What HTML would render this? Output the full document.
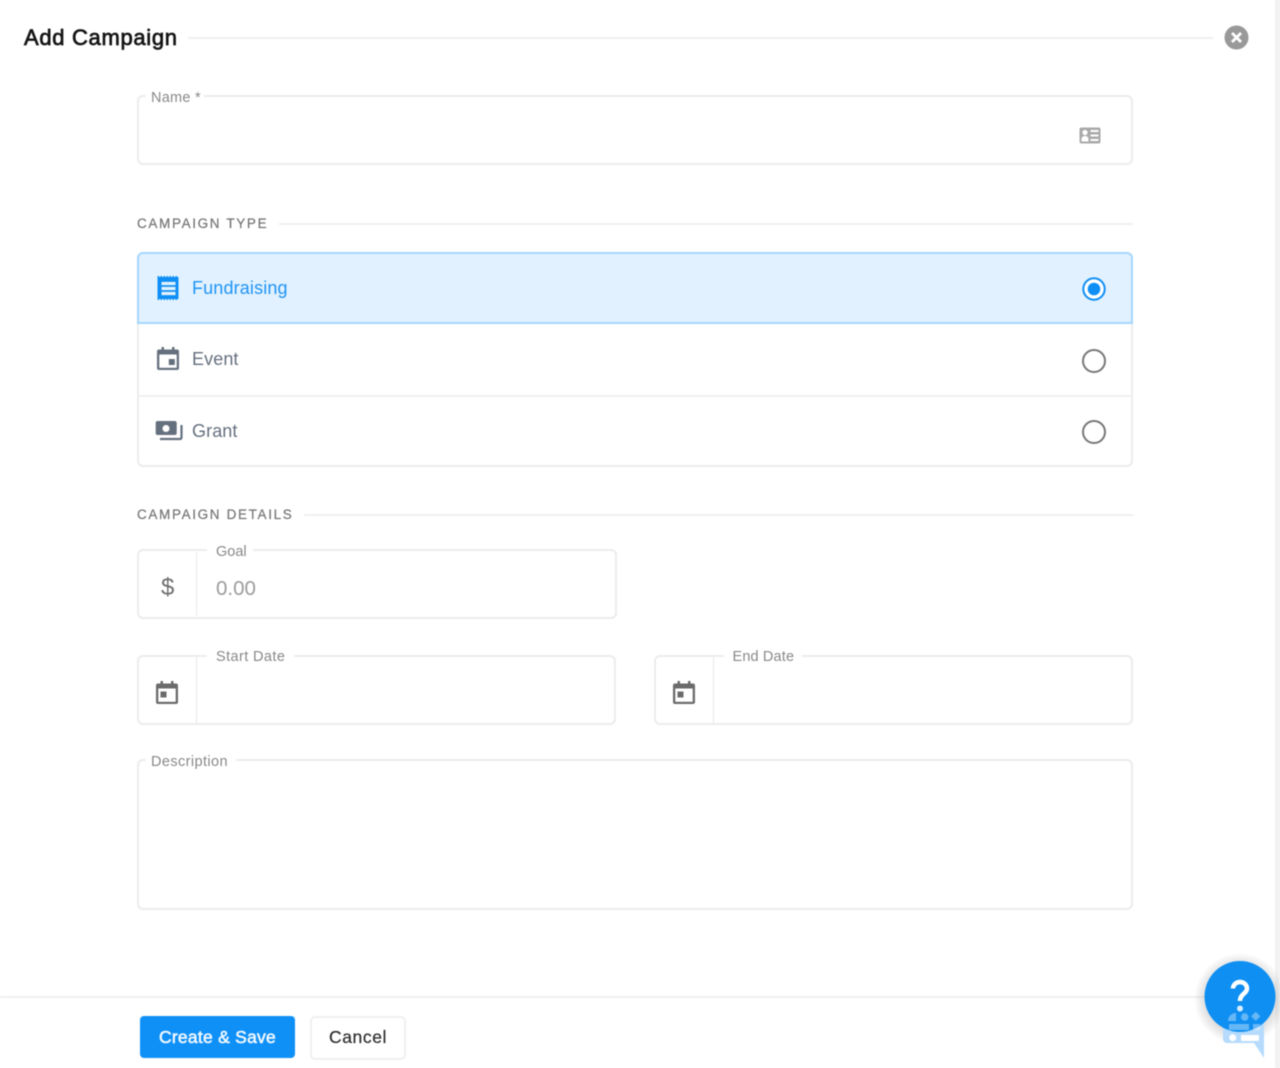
<!DOCTYPE html>
<html lang="en"><head><meta charset="utf-8"><title>Add Campaign</title>
<style>
html,body{margin:0;padding:0;width:1280px;height:1068px;overflow:hidden;background:#fff}
body{position:relative;font-family:"Liberation Sans",sans-serif}
#w{position:absolute;inset:0;filter:blur(.4px)}
#w div,#w svg,#w span{position:absolute;box-sizing:border-box}
.t{white-space:nowrap;line-height:20px;height:20px}
.box{border:2px solid #ececec;border-radius:6px;background:#fff}
.gap{background:#fff;height:4px}
.lab{font-size:14.5px;color:#888}
.sec{font-size:13.5px;color:#747474;letter-spacing:1.65px;-webkit-text-stroke:.2px #747474}
.ln{background:#f0f0f0;height:2px}
.opt{font-size:18px;color:#65707f}
</style></head><body><div id="w">
<div style="left:1275px;top:0;width:5px;height:1068px;background:#f2f2f2"></div>

<div class="t" style="left:24px;top:28px;font-size:22px;color:#151515;letter-spacing:.68px;-webkit-text-stroke:.7px #151515">Add Campaign</div>
<div class="ln" style="left:188px;top:37px;width:1025px"></div>
<svg style="left:1224px;top:25px" width="25" height="25" viewBox="0 0 25 25"><circle cx="12.5" cy="12.5" r="12" fill="#999"/><path d="M8 8l9 9M17 8l-9 9" stroke="#fff" stroke-width="2.8"/></svg>

<div class="box" style="left:137px;top:95px;width:996px;height:70px"></div>
<div class="gap" style="left:146px;top:93px;width:58px"></div>
<div class="t lab" style="left:151px;top:88px;letter-spacing:.25px">Name *</div>
<svg style="left:1079px;top:127px" width="22" height="17" viewBox="0 0 22 17"><rect x="0.5" y="0.5" width="21" height="16" rx="2" fill="#a9a9a9"/><circle cx="6" cy="5.500" r="2.600" fill="#fff"/><path d="M2.500 14.500v-2c0-2.500 1.500-3.500 3.500-3.500s3.500 1 3.500 3.500v2z" fill="#fff"/><path d="M11.500 4h8M11.500 8.500h8M11.500 13h8" stroke="#fff" stroke-width="2"/></svg>

<div class="t sec" style="left:137px;top:214px">CAMPAIGN TYPE</div>
<div class="ln" style="left:279px;top:223px;width:854px"></div>

<div class="box" style="left:137px;top:252px;width:996px;height:215px"></div>
<div style="left:137px;top:252px;width:996px;height:72px;background:#e1f1ff;border:2px solid #a6d7fd;border-radius:6px 6px 0 0"></div>
<div class="ln" style="left:138px;top:395px;width:994px"></div>

<svg style="left:157px;top:276px" width="22" height="24" viewBox="0 0 22 24"><rect x="0.500" y="1" width="21" height="22" fill="#0f8ff5"/><path d="M.5 .5h21M.5 23.500h21" stroke="#0f8ff5" stroke-dasharray="1.500 1.500"/><path d="M4.500 7.500h14M4.500 12.500h14M4.500 17.500h14" stroke="#e1f1ff" stroke-width="3.200"/></svg>
<div class="t" style="left:192px;top:278px;font-size:18px;color:#2095f5;letter-spacing:.15px">Fundraising</div>
<svg style="left:1082px;top:277px" width="24" height="24" viewBox="0 0 24 24"><circle cx="12" cy="12" r="10.700" fill="#fff" stroke="#0f8ff5" stroke-width="2"/><circle cx="12" cy="12" r="6.300" fill="#0f8ff5"/></svg>

<svg style="left:157px;top:347px" width="22" height="24" viewBox="0 0 22 24"><path d="M4.500 0h2.500v2.500h8V0h2.500v2.500h2.500a2 2 0 0 1 2 2V21a2 2 0 0 1-2 2H2a2 2 0 0 1-2-2V4.500a2 2 0 0 1 2-2h2.500z" fill="#65707f"/><rect x="2.300" y="7.500" width="17.400" height="13.300" fill="#fff"/><rect x="11.800" y="12" width="6" height="6" fill="#65707f"/></svg>
<div class="t opt" style="left:192px;top:349px;letter-spacing:.1px">Event</div>
<svg style="left:1082px;top:349px" width="24" height="24" viewBox="0 0 24 24"><circle cx="12" cy="12" r="11" fill="none" stroke="#777" stroke-width="2"/></svg>

<svg style="left:155px;top:420px" width="28" height="21" viewBox="0 0 28 21"><rect x="0.700" y="1" width="21" height="14" rx="2" fill="#65707f"/><circle cx="11" cy="8.500" r="3.500" fill="#fff"/><path d="M26.500 5v12.500a1.500 1.500 0 0 1-1.500 1.500H5" fill="none" stroke="#65707f" stroke-width="2.200"/></svg>
<div class="t opt" style="left:192px;top:421px;letter-spacing:.1px">Grant</div>
<svg style="left:1082px;top:420px" width="24" height="24" viewBox="0 0 24 24"><circle cx="12" cy="12" r="11" fill="none" stroke="#777" stroke-width="2"/></svg>

<div class="t sec" style="left:137px;top:505px">CAMPAIGN DETAILS</div>
<div class="ln" style="left:304px;top:514px;width:829px"></div>

<div class="box" style="left:137px;top:549px;width:480px;height:70px"></div>
<div style="left:196px;top:552px;width:1px;height:64px;background:#e8e8e8"></div>
<div class="gap" style="left:207px;top:547px;width:46px"></div>
<div class="t lab" style="left:216px;top:542px">Goal</div>
<div class="t" style="left:161px;top:578px;font-size:24px;color:#6f6f6f">$</div>
<div class="t" style="left:216px;top:579px;font-size:20.500px;color:#9c9c9c">0.00</div>

<div class="box" style="left:137px;top:655px;width:479px;height:70px"></div>
<div style="left:196px;top:656px;width:1px;height:68px;background:#e8e8e8"></div>
<div class="gap" style="left:207px;top:653px;width:87px"></div>
<div class="t lab" style="left:216px;top:647px;letter-spacing:.4px">Start Date</div>
<svg style="left:156px;top:681px" width="22" height="24" viewBox="0 0 22 24"><path d="M4.500 0h2.500v2.500h8V0h2.500v2.500h2.500a2 2 0 0 1 2 2V21a2 2 0 0 1-2 2H2a2 2 0 0 1-2-2V4.500a2 2 0 0 1 2-2h2.500z" fill="#6b6b6b"/><rect x="2.300" y="7.500" width="17.400" height="13.300" fill="#fff"/><rect x="4.500" y="10.500" width="6" height="6" fill="#6b6b6b"/></svg>

<div class="box" style="left:654px;top:655px;width:479px;height:70px"></div>
<div style="left:713px;top:656px;width:1px;height:68px;background:#e8e8e8"></div>
<div class="gap" style="left:724px;top:653px;width:78px"></div>
<div class="t lab" style="left:732.500px;top:647px;letter-spacing:.15px">End Date</div>
<svg style="left:673px;top:681px" width="22" height="24" viewBox="0 0 22 24"><path d="M4.500 0h2.500v2.500h8V0h2.500v2.500h2.500a2 2 0 0 1 2 2V21a2 2 0 0 1-2 2H2a2 2 0 0 1-2-2V4.500a2 2 0 0 1 2-2h2.500z" fill="#6b6b6b"/><rect x="2.300" y="7.500" width="17.400" height="13.300" fill="#fff"/><rect x="4.500" y="10.500" width="6" height="6" fill="#6b6b6b"/></svg>

<div class="box" style="left:137px;top:759px;width:996px;height:151px"></div>
<div class="gap" style="left:146px;top:757px;width:90px"></div>
<div class="t lab" style="left:151px;top:752px;letter-spacing:.4px">Description</div>

<div class="ln" style="left:0;top:996px;width:1275px"></div>
<div style="left:140px;top:1016px;width:155px;height:42px;background:#0f90f7;border-radius:4px"></div>
<div class="t" style="left:140px;top:1027px;width:155px;text-align:center;font-size:17.500px;color:#f2f9ff;letter-spacing:.25px;-webkit-text-stroke:.55px #f2f9ff">Create &amp; Save</div>
<div style="left:310px;top:1016px;width:96px;height:44px;background:#fff;border:2px solid #f0f0f0;border-radius:5px"></div>
<div class="t" style="left:310px;top:1027px;width:96px;text-align:center;font-size:17.500px;color:#2c2c2c;letter-spacing:.6px;-webkit-text-stroke:.2px #2c2c2c">Cancel</div>

<svg style="left:1190px;top:950px" width="90" height="118" viewBox="0 0 90 118"><defs><radialGradient id="s"><stop offset=".75" stop-color="#000" stop-opacity=".13"/><stop offset="1" stop-color="#000" stop-opacity="0"/></radialGradient></defs><circle cx="50" cy="49" r="46" fill="url(#s)"/><path d="M37 60h37v33l0 15-10-15H37a4 4 0 0 1-4-4V64a4 4 0 0 1 4-4z" fill="#b6dbfd"/><circle cx="50" cy="46.500" r="35.500" fill="#0f8ff2"/><path d="M43 38.500a7 6.500 0 0 1 14 0c0 5-7 5.500-7 12.500" fill="none" stroke="#fff" stroke-width="4.500"/><circle cx="50" cy="58.500" r="3" fill="#d8edff"/><g fill="#fff" opacity=".36"><path d="M38 71a8 8 0 0 1 8-8v8z"/><circle cx="54.700" cy="67" r="3.700"/><rect x="62.500" y="63" width="6.500" height="6.500" transform="rotate(45 65.700 66.300)"/><path d="M39 74h20v6H39zM63 74h7v6h-7z"/></g><circle cx="42.700" cy="87.700" r="3.500" fill="#fff"/><rect x="51" y="85" width="18" height="6" rx="1" fill="#fff"/></svg>
</div></body></html>
